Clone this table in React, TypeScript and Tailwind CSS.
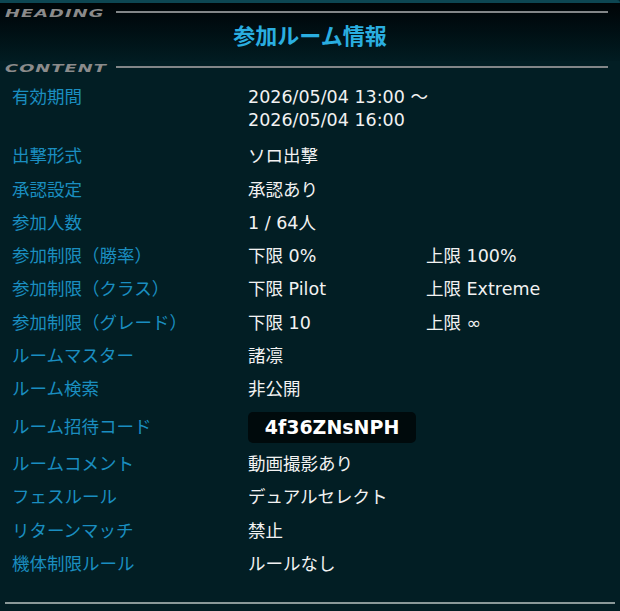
import React from "react";

const rows: { label: string; v1: React.ReactNode; v2?: string; code?: boolean }[] = [
  { label: "出撃形式", v1: "ソロ出撃" },
  { label: "承認設定", v1: "承認あり" },
  { label: "参加人数", v1: "1 / 64人" },
  { label: "参加制限（勝率）", v1: "下限 0%", v2: "上限 100%" },
  { label: "参加制限（クラス）", v1: "下限 Pilot", v2: "上限 Extreme" },
  { label: "参加制限（グレード）", v1: "下限 10", v2: "上限 ∞" },
  { label: "ルームマスター", v1: "諸凛" },
  { label: "ルーム検索", v1: "非公開" },
  { label: "ルーム招待コード", v1: "4f36ZNsNPH", code: true },
  { label: "ルームコメント", v1: "動画撮影あり" },
  { label: "フェスルール", v1: "デュアルセレクト" },
  { label: "リターンマッチ", v1: "禁止" },
  { label: "機体制限ルール", v1: "ルールなし" },
];

function SectionLabel({ text }: { text: string }) {
  return (
    <div className="flex h-[12px] items-center gap-[6px] pl-[5px] pr-[12px]">
      <div className="w-[105px] shrink-0 overflow-visible whitespace-nowrap">
        <span
          className="inline-block origin-left scale-x-[1.62] text-[11px] leading-[12px] font-bold italic tracking-[0.06em] text-[#8b8b8b]"
          style={{ fontFamily: '"DejaVu Sans", sans-serif' }}
        >
          {text}
        </span>
      </div>
      <div className="h-[2px] flex-1 bg-[#828688]" />
    </div>
  );
}

export default function App() {
  const font = '"DejaVu Sans", "Noto Sans CJK JP", sans-serif';
  return (
    <div className="w-[620px] h-[611px] bg-[#021e24] overflow-hidden" style={{ fontFamily: font }}>
      <div className="h-[3px] bg-[#0d4652] rounded-tr-[10px]" />
      <div className="bg-gradient-to-b from-[#000507] to-[#011c22] pt-[3px] pb-[13px]">
        <SectionLabel text="HEADING" />
        <div
          className="text-center text-[22px] leading-[28px] font-bold text-[#2aaee0] mt-[2px]"
          style={{ fontFamily: '"Noto Sans CJK JP", sans-serif' }}
        >
          参加ルーム情報
        </div>
      </div>
      <SectionLabel text="CONTENT" />
      <div className="flex flex-col gap-[10.3px] pt-[13px] pl-[12px] text-[17.5px] leading-[23px]">
        <div className="flex mb-[3px]">
          <div className="w-[236px] text-[#1a8ec0]">有効期間</div>
          <div className="text-[#f2f2f2]">
            <div>2026/05/04 13:00 ～</div>
            <div>2026/05/04 16:00</div>
          </div>
        </div>
        {rows.map((r) => (
          <div key={r.label} className="flex items-center">
            <div className="w-[236px] text-[#1a8ec0]">{r.label}</div>
            {r.code ? (
              <div className="w-[168px] h-[31px] rounded-[5px] bg-[#000a0c] text-white font-bold text-[19px] leading-[31px] text-center">
                {r.v1}
              </div>
            ) : (
              <>
                <div className="w-[178px] text-[#f2f2f2]">{r.v1}</div>
                {r.v2 && <div className="text-[#f2f2f2]">{r.v2}</div>}
              </>
            )}
          </div>
        ))}
      </div>
      <div className="mt-[26px] mx-[5px] h-[2px] bg-[#8a9999]" />
    </div>
  );
}
